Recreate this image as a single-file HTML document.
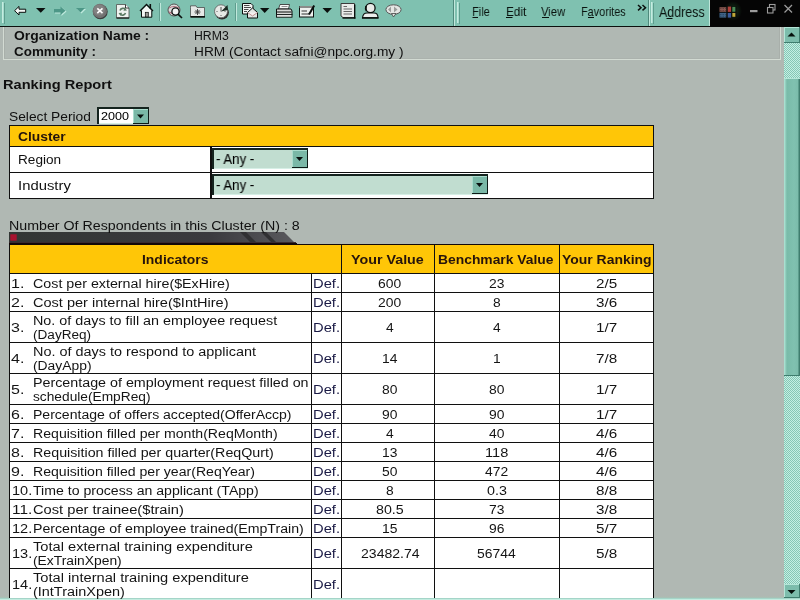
<!DOCTYPE html>
<html><head><meta charset="utf-8"><title>Ranking Report</title>
<style>
html,body{margin:0;padding:0;width:800px;height:600px;overflow:hidden;background:#b0b8b3;}
body{position:relative;font-family:"Liberation Sans",sans-serif;}
.r{position:absolute;}
.t{position:absolute;white-space:pre;will-change:transform;line-height:16px;transform-origin:0 0;font-family:"Liberation Sans",sans-serif;}
svg{position:absolute;left:0;top:0;}
</style></head><body>
<div class="r" style="left:0px;top:0px;width:800px;height:26px;background:#7fc1b0;"></div>
<div class="r" style="left:0px;top:26px;width:800px;height:1px;background:#0c100e;"></div>
<div class="r" style="left:710px;top:0px;width:90px;height:27px;background:#050505;"></div>
<div class="r" style="left:709px;top:0px;width:1px;height:26px;background:#bfe6da;"></div>
<div class="r" style="left:2px;top:2px;width:1px;height:21px;background:#c6ebe0;"></div>
<div class="r" style="left:3px;top:2px;width:1px;height:21px;background:#a5dccd;"></div>
<div class="r" style="left:4px;top:3px;width:1px;height:21px;background:#5e9c8d;"></div>
<div class="r" style="left:457px;top:2px;width:1px;height:21px;background:#c6ebe0;"></div>
<div class="r" style="left:458px;top:2px;width:1px;height:21px;background:#a5dccd;"></div>
<div class="r" style="left:459px;top:3px;width:1px;height:21px;background:#5e9c8d;"></div>
<div class="r" style="left:651px;top:2px;width:1px;height:21px;background:#c6ebe0;"></div>
<div class="r" style="left:652px;top:2px;width:1px;height:21px;background:#a5dccd;"></div>
<div class="r" style="left:653px;top:3px;width:1px;height:21px;background:#5e9c8d;"></div>
<div class="r" style="left:453px;top:0px;width:1px;height:26px;background:#4f8a7c;"></div>
<div class="r" style="left:454px;top:0px;width:1px;height:26px;background:#c0e8dc;"></div>
<div class="r" style="left:648px;top:0px;width:1px;height:26px;background:#4f8a7c;"></div>
<div class="r" style="left:649px;top:0px;width:1px;height:26px;background:#c0e8dc;"></div>
<div class="r" style="left:160px;top:3px;width:1px;height:18px;background:#c0e8dc;"></div>
<div class="r" style="left:159px;top:3px;width:1px;height:18px;background:#5e9c8d;"></div>
<div class="r" style="left:236px;top:3px;width:1px;height:18px;background:#c0e8dc;"></div>
<div class="r" style="left:235px;top:3px;width:1px;height:18px;background:#5e9c8d;"></div>
<div class="r" style="left:3px;top:27px;width:1px;height:33px;background:#d3dbd3;"></div>
<div class="r" style="left:3px;top:59px;width:778px;height:1px;background:#d3dbd3;"></div>
<div class="r" style="left:780px;top:27px;width:1px;height:33px;background:#d3dbd3;"></div>
<div class="r" style="left:4px;top:27px;width:1px;height:32px;background:#a8afaa;"></div>
<div class="r" style="left:779px;top:27px;width:1px;height:32px;background:#a8afaa;"></div>
<div class="r" style="left:4px;top:58px;width:776px;height:1px;background:#abb2ad;"></div>
<div class="r" style="left:784px;top:27px;width:16px;height:571px;background:#c4f0e4;background-image:linear-gradient(45deg,#86c6b5 25%,transparent 25%,transparent 75%,#86c6b5 75%),linear-gradient(45deg,#86c6b5 25%,transparent 25%,transparent 75%,#86c6b5 75%);background-size:2px 2px;background-position:0 0,1px 1px;"></div>
<div class="r" style="left:784px;top:27px;width:16px;height:16px;background:#7cbdac;"></div>
<div class="r" style="left:784px;top:27px;width:16px;height:1px;background:#b5e6d8;"></div>
<div class="r" style="left:784px;top:27px;width:1px;height:16px;background:#b5e6d8;"></div>
<div class="r" style="left:784px;top:42px;width:16px;height:1px;background:#3f7d6e;"></div>
<div class="r" style="left:799px;top:27px;width:1px;height:16px;background:#3f7d6e;"></div>
<div class="r" style="left:784px;top:584px;width:16px;height:14px;background:#7cbdac;"></div>
<div class="r" style="left:784px;top:584px;width:16px;height:1px;background:#b5e6d8;"></div>
<div class="r" style="left:784px;top:584px;width:1px;height:14px;background:#b5e6d8;"></div>
<div class="r" style="left:784px;top:597px;width:16px;height:1px;background:#3f7d6e;"></div>
<div class="r" style="left:799px;top:584px;width:1px;height:14px;background:#3f7d6e;"></div>
<div class="r" style="left:784px;top:78px;width:16px;height:298px;background:linear-gradient(90deg,#b5e8da 0,#9dd6c6 1px,#79bba9 3px,#80c1b0 10px,#7bbcab 14px,#3f7d6e 15px);"></div>
<div class="r" style="left:784px;top:78px;width:16px;height:1px;background:#b5e6d8;"></div>
<div class="r" style="left:784px;top:375px;width:16px;height:1px;background:#3f7d6e;"></div>
<div class="r" style="left:0px;top:598px;width:800px;height:1px;background:#a5d5c8;"></div>
<div class="r" style="left:0px;top:599px;width:800px;height:1px;background:#c4ece0;"></div>
<div class="r" style="left:0px;top:596px;width:784px;height:2px;background:linear-gradient(180deg,#b1b8b1,#a6c2b8);"></div>
<div class="r" style="left:97px;top:107px;width:52px;height:17px;background:#ffffff;"></div>
<div class="r" style="left:97px;top:107px;width:52px;height:2px;background:#15241f;"></div>
<div class="r" style="left:97px;top:107px;width:2px;height:17px;background:#15241f;"></div>
<div class="r" style="left:99px;top:123px;width:50px;height:1px;background:#d6efe6;"></div>
<div class="r" style="left:133px;top:109px;width:16px;height:15px;background:#7ab8a7;"></div>
<div class="r" style="left:133px;top:109px;width:16px;height:1px;background:#a9dccd;"></div>
<div class="r" style="left:133px;top:109px;width:1px;height:15px;background:#a9dccd;"></div>
<div class="r" style="left:133px;top:123px;width:16px;height:1px;background:#0c1a16;"></div>
<div class="r" style="left:148px;top:109px;width:1px;height:15px;background:#0c1a16;"></div>
<div class="r" style="left:133px;top:123px;width:16px;height:1px;background:#0c1a16;"></div>
<svg width="800" height="600" style="pointer-events:none"><polygon points="137,114.5 144,114.5 140.5,118.5" fill="#08100e"/></svg>
<div class="r" style="left:9px;top:125px;width:645px;height:74px;background:#101010;"></div>
<div class="r" style="left:10px;top:126px;width:643px;height:20px;background:#ffc607;"></div>
<div class="r" style="left:10px;top:147px;width:200px;height:25px;background:#ffffff;"></div>
<div class="r" style="left:212px;top:147px;width:441px;height:25px;background:#ffffff;"></div>
<div class="r" style="left:10px;top:173px;width:200px;height:25px;background:#ffffff;"></div>
<div class="r" style="left:212px;top:173px;width:441px;height:25px;background:#ffffff;"></div>
<div class="r" style="left:212px;top:148px;width:96px;height:21px;background:#c1ddd0;"></div>
<div class="r" style="left:212px;top:148px;width:96px;height:2px;background:#15241f;"></div>
<div class="r" style="left:212px;top:148px;width:2px;height:21px;background:#15241f;"></div>
<div class="r" style="left:214px;top:168px;width:94px;height:1px;background:#d6efe6;"></div>
<div class="r" style="left:292px;top:150px;width:16px;height:18px;background:#7ab8a7;"></div>
<div class="r" style="left:292px;top:150px;width:16px;height:1px;background:#a9dccd;"></div>
<div class="r" style="left:292px;top:150px;width:1px;height:18px;background:#a9dccd;"></div>
<div class="r" style="left:292px;top:167px;width:16px;height:1px;background:#0c1a16;"></div>
<div class="r" style="left:307px;top:150px;width:1px;height:18px;background:#0c1a16;"></div>
<svg width="800" height="600" style="pointer-events:none"><polygon points="296,157 303,157 299.5,161" fill="#08100e"/></svg>
<div class="r" style="left:212px;top:174px;width:276px;height:21px;background:#c1ddd0;"></div>
<div class="r" style="left:212px;top:174px;width:276px;height:2px;background:#15241f;"></div>
<div class="r" style="left:212px;top:174px;width:2px;height:21px;background:#15241f;"></div>
<div class="r" style="left:214px;top:194px;width:274px;height:1px;background:#d6efe6;"></div>
<div class="r" style="left:472px;top:176px;width:16px;height:18px;background:#7ab8a7;"></div>
<div class="r" style="left:472px;top:176px;width:16px;height:1px;background:#a9dccd;"></div>
<div class="r" style="left:472px;top:176px;width:1px;height:18px;background:#a9dccd;"></div>
<div class="r" style="left:472px;top:193px;width:16px;height:1px;background:#0c1a16;"></div>
<div class="r" style="left:487px;top:176px;width:1px;height:18px;background:#0c1a16;"></div>
<svg width="800" height="600" style="pointer-events:none"><polygon points="476,183 483,183 479.5,187" fill="#08100e"/></svg>
<svg width="800" height="600"><defs><linearGradient id="bg1" x1="0" x2="1" y1="0" y2="0"><stop offset="0" stop-color="#323634"/><stop offset="0.7" stop-color="#3a3a3e"/><stop offset="1" stop-color="#5a5a5e"/></linearGradient></defs><polygon points="9,232 284,232 295,243 9,243" fill="url(#bg1)"/><polygon points="240,232 246,232 257,243 251,243" fill="#303032"/><polygon points="261,232 266,232 277,243 272,243" fill="#303032"/><rect x="10.3" y="234.3" width="6.4" height="6.4" fill="#a8122e"/></svg>
<div class="r" style="left:9px;top:242px;width:287px;height:1px;background:#3a2a30;"></div>
<div class="r" style="left:9px;top:243px;width:288px;height:1px;background:#120808;"></div>
<div class="r" style="left:9px;top:244px;width:645px;height:1px;background:#120808;"></div>
<div class="r" style="left:9px;top:245px;width:645px;height:354px;background:#101010;"></div>
<div class="r" style="left:10px;top:245px;width:331px;height:28px;background:#ffc607;"></div>
<div class="r" style="left:342px;top:245px;width:92px;height:28px;background:#ffc607;"></div>
<div class="r" style="left:435px;top:245px;width:124px;height:28px;background:#ffc607;"></div>
<div class="r" style="left:560px;top:245px;width:93px;height:28px;background:#ffc607;"></div>
<div class="r" style="left:10px;top:274px;width:301px;height:18px;background:#ffffff;"></div>
<div class="r" style="left:312px;top:274px;width:29px;height:18px;background:#ffffff;"></div>
<div class="r" style="left:342px;top:274px;width:92px;height:18px;background:#ffffff;"></div>
<div class="r" style="left:435px;top:274px;width:124px;height:18px;background:#ffffff;"></div>
<div class="r" style="left:560px;top:274px;width:93px;height:18px;background:#ffffff;"></div>
<div class="r" style="left:10px;top:293px;width:301px;height:18px;background:#ffffff;"></div>
<div class="r" style="left:312px;top:293px;width:29px;height:18px;background:#ffffff;"></div>
<div class="r" style="left:342px;top:293px;width:92px;height:18px;background:#ffffff;"></div>
<div class="r" style="left:435px;top:293px;width:124px;height:18px;background:#ffffff;"></div>
<div class="r" style="left:560px;top:293px;width:93px;height:18px;background:#ffffff;"></div>
<div class="r" style="left:10px;top:312px;width:301px;height:30px;background:#ffffff;"></div>
<div class="r" style="left:312px;top:312px;width:29px;height:30px;background:#ffffff;"></div>
<div class="r" style="left:342px;top:312px;width:92px;height:30px;background:#ffffff;"></div>
<div class="r" style="left:435px;top:312px;width:124px;height:30px;background:#ffffff;"></div>
<div class="r" style="left:560px;top:312px;width:93px;height:30px;background:#ffffff;"></div>
<div class="r" style="left:10px;top:343px;width:301px;height:30px;background:#ffffff;"></div>
<div class="r" style="left:312px;top:343px;width:29px;height:30px;background:#ffffff;"></div>
<div class="r" style="left:342px;top:343px;width:92px;height:30px;background:#ffffff;"></div>
<div class="r" style="left:435px;top:343px;width:124px;height:30px;background:#ffffff;"></div>
<div class="r" style="left:560px;top:343px;width:93px;height:30px;background:#ffffff;"></div>
<div class="r" style="left:10px;top:374px;width:301px;height:30px;background:#ffffff;"></div>
<div class="r" style="left:312px;top:374px;width:29px;height:30px;background:#ffffff;"></div>
<div class="r" style="left:342px;top:374px;width:92px;height:30px;background:#ffffff;"></div>
<div class="r" style="left:435px;top:374px;width:124px;height:30px;background:#ffffff;"></div>
<div class="r" style="left:560px;top:374px;width:93px;height:30px;background:#ffffff;"></div>
<div class="r" style="left:10px;top:405px;width:301px;height:18px;background:#ffffff;"></div>
<div class="r" style="left:312px;top:405px;width:29px;height:18px;background:#ffffff;"></div>
<div class="r" style="left:342px;top:405px;width:92px;height:18px;background:#ffffff;"></div>
<div class="r" style="left:435px;top:405px;width:124px;height:18px;background:#ffffff;"></div>
<div class="r" style="left:560px;top:405px;width:93px;height:18px;background:#ffffff;"></div>
<div class="r" style="left:10px;top:424px;width:301px;height:18px;background:#ffffff;"></div>
<div class="r" style="left:312px;top:424px;width:29px;height:18px;background:#ffffff;"></div>
<div class="r" style="left:342px;top:424px;width:92px;height:18px;background:#ffffff;"></div>
<div class="r" style="left:435px;top:424px;width:124px;height:18px;background:#ffffff;"></div>
<div class="r" style="left:560px;top:424px;width:93px;height:18px;background:#ffffff;"></div>
<div class="r" style="left:10px;top:443px;width:301px;height:18px;background:#ffffff;"></div>
<div class="r" style="left:312px;top:443px;width:29px;height:18px;background:#ffffff;"></div>
<div class="r" style="left:342px;top:443px;width:92px;height:18px;background:#ffffff;"></div>
<div class="r" style="left:435px;top:443px;width:124px;height:18px;background:#ffffff;"></div>
<div class="r" style="left:560px;top:443px;width:93px;height:18px;background:#ffffff;"></div>
<div class="r" style="left:10px;top:462px;width:301px;height:18px;background:#ffffff;"></div>
<div class="r" style="left:312px;top:462px;width:29px;height:18px;background:#ffffff;"></div>
<div class="r" style="left:342px;top:462px;width:92px;height:18px;background:#ffffff;"></div>
<div class="r" style="left:435px;top:462px;width:124px;height:18px;background:#ffffff;"></div>
<div class="r" style="left:560px;top:462px;width:93px;height:18px;background:#ffffff;"></div>
<div class="r" style="left:10px;top:481px;width:301px;height:18px;background:#ffffff;"></div>
<div class="r" style="left:312px;top:481px;width:29px;height:18px;background:#ffffff;"></div>
<div class="r" style="left:342px;top:481px;width:92px;height:18px;background:#ffffff;"></div>
<div class="r" style="left:435px;top:481px;width:124px;height:18px;background:#ffffff;"></div>
<div class="r" style="left:560px;top:481px;width:93px;height:18px;background:#ffffff;"></div>
<div class="r" style="left:10px;top:500px;width:301px;height:18px;background:#ffffff;"></div>
<div class="r" style="left:312px;top:500px;width:29px;height:18px;background:#ffffff;"></div>
<div class="r" style="left:342px;top:500px;width:92px;height:18px;background:#ffffff;"></div>
<div class="r" style="left:435px;top:500px;width:124px;height:18px;background:#ffffff;"></div>
<div class="r" style="left:560px;top:500px;width:93px;height:18px;background:#ffffff;"></div>
<div class="r" style="left:10px;top:519px;width:301px;height:18px;background:#ffffff;"></div>
<div class="r" style="left:312px;top:519px;width:29px;height:18px;background:#ffffff;"></div>
<div class="r" style="left:342px;top:519px;width:92px;height:18px;background:#ffffff;"></div>
<div class="r" style="left:435px;top:519px;width:124px;height:18px;background:#ffffff;"></div>
<div class="r" style="left:560px;top:519px;width:93px;height:18px;background:#ffffff;"></div>
<div class="r" style="left:10px;top:538px;width:301px;height:30px;background:#ffffff;"></div>
<div class="r" style="left:312px;top:538px;width:29px;height:30px;background:#ffffff;"></div>
<div class="r" style="left:342px;top:538px;width:92px;height:30px;background:#ffffff;"></div>
<div class="r" style="left:435px;top:538px;width:124px;height:30px;background:#ffffff;"></div>
<div class="r" style="left:560px;top:538px;width:93px;height:30px;background:#ffffff;"></div>
<div class="r" style="left:10px;top:569px;width:301px;height:30px;background:#ffffff;"></div>
<div class="r" style="left:312px;top:569px;width:29px;height:30px;background:#ffffff;"></div>
<div class="r" style="left:342px;top:569px;width:92px;height:30px;background:#ffffff;"></div>
<div class="r" style="left:435px;top:569px;width:124px;height:30px;background:#ffffff;"></div>
<div class="r" style="left:560px;top:569px;width:93px;height:30px;background:#ffffff;"></div>
<div class="r" style="left:0px;top:598px;width:800px;height:1px;background:#a5d5c8;"></div>
<div class="r" style="left:0px;top:599px;width:800px;height:1px;background:#c4ece0;"></div>
<svg width="800" height="600" viewBox="0 0 800 600"><polygon points="14.6,10.7 19,6.4 19,9.2 25.7,9.2 25.7,12.3 19,12.3 19,15" fill="#f4f8f6" stroke="#0a0f0d" stroke-width="1" stroke-linejoin="miter"/><polygon points="36,8 45.5,8 40.75,12.8" fill="#0a0f0d"/><polygon points="55,10 61.5,10 61.5,7 66.5,11.5 61.5,16 61.5,13.5 55,13.5" fill="#bfe9dd"/><polygon points="54,9 60.5,9 60.5,6.5 65.5,10.8 60.5,15 60.5,12.6 54,12.6" fill="#4d9787"/><polygon points="77,9 86,9 81.5,13.6" fill="#bfe9dd"/><polygon points="76,8 85,8 80.5,12.6" fill="#4d9787"/><circle cx="100.3" cy="11.8" r="7.4" fill="#3a3a3a"/><circle cx="99.8" cy="11" r="7.2" fill="#727272"/><circle cx="99.2" cy="10" r="5.6" fill="#828282"/><path d="M97.3,8.4 L102.5,13.2 M102.5,8.4 L97.3,13.2" stroke="#ffffff" stroke-width="1.6" fill="none"/><path d="M116.5,4.5 H125.5 L129,8 V18 H116.5 Z" fill="#eef2ef" stroke="#5a605c" stroke-width="0.9"/><path d="M116.5,18 H129.2" stroke="#101412" stroke-width="1.2"/><path d="M125.5,4.5 V8 H129" fill="#ffffff" stroke="#0a0f0d" stroke-width="0.8"/><path d="M120,10.5 A3.2,3.2 0 0 1 125.5,9.5 M125.5,13 A3.2,3.2 0 0 1 120,14" stroke="#5a7a62" stroke-width="1.6" fill="none"/><polygon points="124.5,7.5 127,10.5 123.5,10.8" fill="#5a7a62"/><polygon points="121,16 118.5,13 122,12.8" fill="#5a7a62"/><polygon points="141.5,10.5 146.5,5.5 151.5,10.5 151.5,17 141.5,17" fill="#f3f6f4"/><path d="M140,11 L146.5,4.5 L153,11" stroke="#0a0f0d" stroke-width="1.4" fill="none"/><path d="M141.5,10.5 V17.2 H151.8 V10.5" stroke="#0a0f0d" stroke-width="1" fill="none"/><rect x="149.5" y="4" width="1.6" height="4.5" fill="#0a0f0d"/><rect x="145.3" y="12.3" width="3" height="4.6" fill="#9a9a96" stroke="#0a0f0d" stroke-width="0.7"/><circle cx="174" cy="10" r="6" fill="#d9dcda" stroke="#555" stroke-width="1"/><path d="M169,8 Q174,5 179,8 M169,12 Q174,15 179,12" stroke="#b06a7a" stroke-width="1.2" fill="none"/><circle cx="175.5" cy="11.5" r="3.6" fill="#f4f4f4" stroke="#0a0f0d" stroke-width="1.3"/><path d="M178,14.2 L182,18" stroke="#0a0f0d" stroke-width="1.7"/><path d="M190.5,7.5 V5.8 H196 L197,7.5 H204.5 V17 H190.5 Z" fill="#e6e8e6" stroke="#4a4e4c" stroke-width="0.8"/><rect x="190.5" y="16" width="14.5" height="1.6" fill="#0a0f0d"/><path d="M197.5,9 V15 M194.5,12 H200.5 M195.4,9.9 L199.6,14.1 M199.6,9.9 L195.4,14.1" stroke="#3a3a3a" stroke-width="0.9"/><circle cx="222" cy="12.6" r="6.9" fill="#2e2e2e"/><circle cx="221" cy="11.3" r="6.5" fill="#e6e9e6" stroke="#5a5a5a" stroke-width="0.8"/><path d="M221,11.5 L227.5,5 L228,10 Z" fill="#1a2a22"/><path d="M221,7 V11.5" stroke="#444" stroke-width="0.9"/><path d="M216.5,11.5 h1 M221,16 v-1 M225.5,11.5 h-1" stroke="#555" stroke-width="0.9"/><path d="M242.5,3.5 H251 L253,5.5 V14 H242.5 Z" fill="#f3f5f3" stroke="#0a0f0d" stroke-width="1"/><path d="M244,5.5 H249.5 M244,7.5 H251 M244,9.5 H248.5 M244,11.5 H247" stroke="#4a4a4a" stroke-width="1"/><path d="M247.5,18 V12.5 L252.5,8 L257.5,12.5 V18 Z" fill="#e4e6e4" stroke="#0a0f0d" stroke-width="1"/><path d="M247.5,12.5 L252.5,16 L257.5,12.5" stroke="#b88" stroke-width="0.9" fill="#f6f0f0"/><polygon points="260,8 269.4,8 264.7,13" fill="#0a0f0d"/><path d="M280,4.5 H289.5 L288.5,9 H278.5 Z" fill="#f8f9f8" stroke="#3a3a3a" stroke-width="0.9"/><path d="M281.5,6.5 H287.5" stroke="#888" stroke-width="0.9"/><path d="M276.5,9 H291 L292,11 V15 H276.5 Z" fill="#d8dad8" stroke="#0a0f0d" stroke-width="1"/><rect x="276.5" y="14.6" width="15.5" height="2.6" fill="#eceeec" stroke="#0a0f0d" stroke-width="0.9"/><path d="M277,12 H291.5" stroke="#0a0f0d" stroke-width="1"/><rect x="299.5" y="6.5" width="14" height="10.5" fill="#eef0ee" stroke="#0a0f0d" stroke-width="1"/><rect x="299.5" y="6" width="14" height="2" fill="#8a8c8a"/><path d="M301.5,11 H307 M301.5,14 H309" stroke="#333" stroke-width="1"/><path d="M314.2,5.5 L309,14.5" stroke="#0a0f0d" stroke-width="2"/><polygon points="322.5,8 332,8 327.25,13" fill="#0a0f0d"/><path d="M341,3.5 H354.5 V17.5 H343 L341,16 Z" fill="#e9ebe9" stroke="#3a3a3a" stroke-width="1"/><rect x="354" y="4.5" width="1.4" height="14" fill="#0a0f0d"/><rect x="342.5" y="17.4" width="13" height="1.3" fill="#0a0f0d"/><path d="M343.5,6.5 H347 M343.5,9 H352 M343.5,11.5 H352 M343.5,14 H352" stroke="#666" stroke-width="1"/><circle cx="370.5" cy="8" r="4.6" fill="#e8eae8" stroke="#0a0f0d" stroke-width="1.3"/><path d="M362.5,17.8 Q363,13 367,13 H374 Q378,13 378,17.8 Z" fill="#eceeec" stroke="#0a0f0d" stroke-width="1.1"/><rect x="362" y="17.2" width="16.5" height="1.5" fill="#0a0f0d"/><path d="M366,6 Q365,9 366.5,11" stroke="#0a0f0d" stroke-width="1.6" fill="none"/><ellipse cx="393.5" cy="9.6" rx="7.6" ry="4.8" fill="#e4e6e4" stroke="#555" stroke-width="1"/><path d="M391.5,13.5 L393.5,17 L396,13.5 Z" fill="#e4e6e4" stroke="#444" stroke-width="0.8"/><path d="M388,9.5 L391,6.5 V12.5 Z M394,6.5 L397.5,9.5 L394,12.5 Z" fill="#9a9c9a"/><path d="M638,5 L641,7.7 L638,10.4 M642.5,5 L645.5,7.7 L642.5,10.4" stroke="#0a0f0d" stroke-width="1.5" fill="none"/><path d="M472.5,17.5 H478 M506,17.5 H512.5 M542,17.5 H549 M588,17.5 H594 M666.5,18.5 H672.5" stroke="#0a0f0d" stroke-width="1"/><defs><radialGradient id="wg" cx="0.5" cy="0.5" r="0.5"><stop offset="0" stop-color="#16301c"/><stop offset="0.6" stop-color="#0c180e"/><stop offset="1" stop-color="#050505"/></radialGradient></defs><ellipse cx="733" cy="11" rx="9" ry="10" fill="url(#wg)"/><rect x="719.5" y="7.2" width="7" height="4.6" fill="#8a5a52"/><rect x="719.5" y="12.8" width="7" height="4.8" fill="#3f6488"/><path d="M720,8.5 H726 M720,10.5 H726" stroke="#5a3a3a" stroke-width="0.8" stroke-dasharray="1.5 1"/><path d="M720,14.5 H726 M720,16.3 H726" stroke="#2a4460" stroke-width="0.8" stroke-dasharray="1.5 1"/><rect x="727.5" y="6.6" width="3.8" height="5.4" fill="#b0403a"/><rect x="727.5" y="13" width="3.8" height="4.6" fill="#3c5c9c"/><rect x="732.2" y="7" width="3.4" height="4.8" fill="#4a8c58"/><rect x="732.2" y="12.8" width="3.4" height="4" fill="#c0a838"/><path d="M727,5.8 V18.2 M731.7,5.8 V18 M736,6.4 V17.4 M727,12.4 H736" stroke="#0a0a0a" stroke-width="0.9"/><rect x="750" y="10" width="7.5" height="2.2" fill="#9c9c9c"/><rect x="769.5" y="4.5" width="5.5" height="5.5" fill="none" stroke="#9c9c9c" stroke-width="1.1"/><rect x="767.5" y="7.5" width="5.5" height="5.5" fill="#050505" stroke="#9c9c9c" stroke-width="1.1"/><path d="M784.5,5 L792,12.5 M792,5 L784.5,12.5" stroke="#9c9c9c" stroke-width="1.25"/><polygon points="787.5,36.5 795.5,36.5 791.5,32.5" fill="#06100c"/><polygon points="787.5,590 795.5,590 791.5,594" fill="#06100c"/></svg>
<span class="t" style="left:471.89px;top:3.51px;font-size:13.6px;color:#0a1410;transform:scaleX(0.8183);">File</span>
<span class="t" style="left:505.96px;top:3.51px;font-size:13.6px;color:#0a1410;transform:scaleX(0.8619);">Edit</span>
<span class="t" style="left:541.38px;top:3.51px;font-size:13.6px;color:#0a1410;transform:scaleX(0.8297);">View</span>
<span class="t" style="left:581.40px;top:3.51px;font-size:13.6px;color:#0a1410;transform:scaleX(0.8014);">Favorites</span>
<span class="t" style="left:658.52px;top:4.04px;font-size:15px;color:#0a1410;transform:scaleX(0.8281);">Address</span>
<span class="t" style="left:14.24px;top:28.03px;font-size:12px;color:#101010;transform:scaleX(1.1589);font-weight:bold;">Organization Name :</span>
<span class="t" style="left:14.26px;top:44.03px;font-size:12px;color:#101010;transform:scaleX(1.1179);font-weight:bold;">Community :</span>
<span class="t" style="left:193.93px;top:28.03px;font-size:12px;color:#101010;transform:scaleX(1.0220);">HRM3</span>
<span class="t" style="left:193.85px;top:44.03px;font-size:12px;color:#101010;transform:scaleX(1.1413);">HRM (Contact safni@npc.org.my )</span>
<span class="t" style="left:3.00px;top:77.03px;font-size:12px;color:#101010;transform:scaleX(1.2179);font-weight:bold;">Ranking Report</span>
<span class="t" style="left:8.84px;top:109.03px;font-size:12px;color:#101010;transform:scaleX(1.1477);">Select Period</span>
<span class="t" style="left:101.31px;top:108.36px;font-size:11px;color:#000;transform:scaleX(1.1393);-webkit-text-stroke:0.05px #000;">2000</span>
<span class="t" style="left:17.94px;top:129.03px;font-size:12px;color:#24140c;transform:scaleX(1.1518);font-weight:bold;">Cluster</span>
<span class="t" style="left:18.05px;top:152.03px;font-size:12px;color:#101010;transform:scaleX(1.1333);">Region</span>
<span class="t" style="left:17.98px;top:178.03px;font-size:12px;color:#101010;transform:scaleX(1.2377);">Industry</span>
<span class="t" style="left:216.07px;top:151.37px;font-size:14px;color:#000;transform:scaleX(0.9449);-webkit-text-stroke:0.08px #000;">- Any -</span>
<span class="t" style="left:216.07px;top:177.37px;font-size:14px;color:#000;transform:scaleX(0.9449);-webkit-text-stroke:0.08px #000;">- Any -</span>
<span class="t" style="left:9.02px;top:218.03px;font-size:12px;color:#101010;transform:scaleX(1.1847);">Number Of Respondents in this Cluster (N) : 8</span>
<span class="t" style="left:141.83px;top:252.03px;font-size:12px;color:#26140c;transform:scaleX(1.1602);font-weight:bold;">Indicators</span>
<span class="t" style="left:351.21px;top:252.03px;font-size:12px;color:#26140c;transform:scaleX(1.1904);font-weight:bold;">Your Value</span>
<span class="t" style="left:438.44px;top:252.03px;font-size:12px;color:#26140c;transform:scaleX(1.1547);font-weight:bold;">Benchmark Value</span>
<span class="t" style="left:562.03px;top:252.03px;font-size:12px;color:#26140c;transform:scaleX(1.1610);font-weight:bold;">Your Ranking</span>
<span class="t" style="left:11.32px;top:276.03px;font-size:12px;color:#141414;transform:scaleX(1.3352);">1.</span>
<span class="t" style="left:32.82px;top:276.03px;font-size:12px;color:#141414;transform:scaleX(1.1891);">Cost per external hire($ExHire)</span>
<span class="t" style="left:312.99px;top:276.03px;font-size:12px;color:#191944;transform:scaleX(1.2278);">Def.</span>
<span class="t" style="left:378.41px;top:276.03px;font-size:12px;color:#141414;transform:scaleX(1.1577);">600</span>
<span class="t" style="left:489.09px;top:276.03px;font-size:12px;color:#141414;transform:scaleX(1.1557);">23</span>
<span class="t" style="left:595.81px;top:276.03px;font-size:12px;color:#141414;transform:scaleX(1.2694);">2/5</span>
<span class="t" style="left:11.32px;top:295.03px;font-size:12px;color:#141414;transform:scaleX(1.3352);">2.</span>
<span class="t" style="left:32.80px;top:295.03px;font-size:12px;color:#141414;transform:scaleX(1.2113);">Cost per internal hire($IntHire)</span>
<span class="t" style="left:312.99px;top:295.03px;font-size:12px;color:#191944;transform:scaleX(1.2278);">Def.</span>
<span class="t" style="left:378.41px;top:295.03px;font-size:12px;color:#141414;transform:scaleX(1.1577);">200</span>
<span class="t" style="left:492.97px;top:295.03px;font-size:12px;color:#141414;transform:scaleX(1.1487);">8</span>
<span class="t" style="left:595.81px;top:295.03px;font-size:12px;color:#141414;transform:scaleX(1.2694);">3/6</span>
<span class="t" style="left:11.32px;top:320.03px;font-size:12px;color:#141414;transform:scaleX(1.3352);">3.</span>
<span class="t" style="left:32.81px;top:313.03px;font-size:12px;color:#141414;transform:scaleX(1.1963);">No. of days to fill an employee request</span>
<span class="t" style="left:32.85px;top:327.03px;font-size:12px;color:#141414;transform:scaleX(1.1314);">(DayReq)</span>
<span class="t" style="left:312.99px;top:320.03px;font-size:12px;color:#191944;transform:scaleX(1.2278);">Def.</span>
<span class="t" style="left:386.17px;top:320.03px;font-size:12px;color:#141414;transform:scaleX(1.1487);">4</span>
<span class="t" style="left:492.97px;top:320.03px;font-size:12px;color:#141414;transform:scaleX(1.1487);">4</span>
<span class="t" style="left:595.81px;top:320.03px;font-size:12px;color:#141414;transform:scaleX(1.2694);">1/7</span>
<span class="t" style="left:11.32px;top:351.03px;font-size:12px;color:#141414;transform:scaleX(1.3352);">4.</span>
<span class="t" style="left:32.81px;top:344.03px;font-size:12px;color:#141414;transform:scaleX(1.2024);">No. of days to respond to applicant</span>
<span class="t" style="left:32.84px;top:358.03px;font-size:12px;color:#141414;transform:scaleX(1.1547);">(DayApp)</span>
<span class="t" style="left:312.99px;top:351.03px;font-size:12px;color:#191944;transform:scaleX(1.2278);">Def.</span>
<span class="t" style="left:382.29px;top:351.03px;font-size:12px;color:#141414;transform:scaleX(1.1557);">14</span>
<span class="t" style="left:492.97px;top:351.03px;font-size:12px;color:#141414;transform:scaleX(1.1487);">1</span>
<span class="t" style="left:595.81px;top:351.03px;font-size:12px;color:#141414;transform:scaleX(1.2694);">7/8</span>
<span class="t" style="left:11.32px;top:382.03px;font-size:12px;color:#141414;transform:scaleX(1.3352);">5.</span>
<span class="t" style="left:32.81px;top:375.03px;font-size:12px;color:#141414;transform:scaleX(1.1905);">Percentage of employment request filled on</span>
<span class="t" style="left:32.84px;top:389.03px;font-size:12px;color:#141414;transform:scaleX(1.1440);">schedule(EmpReq)</span>
<span class="t" style="left:312.99px;top:382.03px;font-size:12px;color:#191944;transform:scaleX(1.2278);">Def.</span>
<span class="t" style="left:382.29px;top:382.03px;font-size:12px;color:#141414;transform:scaleX(1.1557);">80</span>
<span class="t" style="left:489.09px;top:382.03px;font-size:12px;color:#141414;transform:scaleX(1.1557);">80</span>
<span class="t" style="left:595.81px;top:382.03px;font-size:12px;color:#141414;transform:scaleX(1.2694);">1/7</span>
<span class="t" style="left:11.32px;top:407.03px;font-size:12px;color:#141414;transform:scaleX(1.3352);">6.</span>
<span class="t" style="left:32.83px;top:407.03px;font-size:12px;color:#141414;transform:scaleX(1.1698);">Percentage of offers accepted(OfferAccp)</span>
<span class="t" style="left:312.99px;top:407.03px;font-size:12px;color:#191944;transform:scaleX(1.2278);">Def.</span>
<span class="t" style="left:382.29px;top:407.03px;font-size:12px;color:#141414;transform:scaleX(1.1557);">90</span>
<span class="t" style="left:489.09px;top:407.03px;font-size:12px;color:#141414;transform:scaleX(1.1557);">90</span>
<span class="t" style="left:595.81px;top:407.03px;font-size:12px;color:#141414;transform:scaleX(1.2694);">1/7</span>
<span class="t" style="left:11.32px;top:426.03px;font-size:12px;color:#141414;transform:scaleX(1.3352);">7.</span>
<span class="t" style="left:32.82px;top:426.03px;font-size:12px;color:#141414;transform:scaleX(1.1756);">Requisition filled per month(ReqMonth)</span>
<span class="t" style="left:312.99px;top:426.03px;font-size:12px;color:#191944;transform:scaleX(1.2278);">Def.</span>
<span class="t" style="left:386.17px;top:426.03px;font-size:12px;color:#141414;transform:scaleX(1.1487);">4</span>
<span class="t" style="left:489.09px;top:426.03px;font-size:12px;color:#141414;transform:scaleX(1.1557);">40</span>
<span class="t" style="left:595.81px;top:426.03px;font-size:12px;color:#141414;transform:scaleX(1.2694);">4/6</span>
<span class="t" style="left:11.32px;top:445.03px;font-size:12px;color:#141414;transform:scaleX(1.3352);">8.</span>
<span class="t" style="left:32.82px;top:445.03px;font-size:12px;color:#141414;transform:scaleX(1.1870);">Requisition filled per quarter(ReqQurt)</span>
<span class="t" style="left:312.99px;top:445.03px;font-size:12px;color:#191944;transform:scaleX(1.2278);">Def.</span>
<span class="t" style="left:382.29px;top:445.03px;font-size:12px;color:#141414;transform:scaleX(1.1557);">13</span>
<span class="t" style="left:485.17px;top:445.03px;font-size:12px;color:#141414;transform:scaleX(1.2156);">118</span>
<span class="t" style="left:595.81px;top:445.03px;font-size:12px;color:#141414;transform:scaleX(1.2694);">4/6</span>
<span class="t" style="left:11.32px;top:464.03px;font-size:12px;color:#141414;transform:scaleX(1.3352);">9.</span>
<span class="t" style="left:32.82px;top:464.03px;font-size:12px;color:#141414;transform:scaleX(1.1744);">Requisition filled per year(ReqYear)</span>
<span class="t" style="left:312.99px;top:464.03px;font-size:12px;color:#191944;transform:scaleX(1.2278);">Def.</span>
<span class="t" style="left:382.29px;top:464.03px;font-size:12px;color:#141414;transform:scaleX(1.1557);">50</span>
<span class="t" style="left:485.21px;top:464.03px;font-size:12px;color:#141414;transform:scaleX(1.1577);">472</span>
<span class="t" style="left:595.81px;top:464.03px;font-size:12px;color:#141414;transform:scaleX(1.2694);">4/6</span>
<span class="t" style="left:11.80px;top:483.03px;font-size:12px;color:#141414;transform:scaleX(1.2108);">10.</span>
<span class="t" style="left:32.82px;top:483.03px;font-size:12px;color:#141414;transform:scaleX(1.1748);">Time to process an applicant (TApp)</span>
<span class="t" style="left:312.99px;top:483.03px;font-size:12px;color:#191944;transform:scaleX(1.2278);">Def.</span>
<span class="t" style="left:386.17px;top:483.03px;font-size:12px;color:#141414;transform:scaleX(1.1487);">8</span>
<span class="t" style="left:486.86px;top:483.03px;font-size:12px;color:#141414;transform:scaleX(1.1913);">0.3</span>
<span class="t" style="left:595.81px;top:483.03px;font-size:12px;color:#141414;transform:scaleX(1.2694);">8/8</span>
<span class="t" style="left:11.75px;top:502.03px;font-size:12px;color:#141414;transform:scaleX(1.2853);">11.</span>
<span class="t" style="left:32.79px;top:502.03px;font-size:12px;color:#141414;transform:scaleX(1.2223);">Cost per trainee($train)</span>
<span class="t" style="left:312.99px;top:502.03px;font-size:12px;color:#191944;transform:scaleX(1.2278);">Def.</span>
<span class="t" style="left:376.19px;top:502.03px;font-size:12px;color:#141414;transform:scaleX(1.1822);">80.5</span>
<span class="t" style="left:489.09px;top:502.03px;font-size:12px;color:#141414;transform:scaleX(1.1557);">73</span>
<span class="t" style="left:595.81px;top:502.03px;font-size:12px;color:#141414;transform:scaleX(1.2694);">3/8</span>
<span class="t" style="left:11.80px;top:521.03px;font-size:12px;color:#141414;transform:scaleX(1.2108);">12.</span>
<span class="t" style="left:32.82px;top:521.03px;font-size:12px;color:#141414;transform:scaleX(1.1789);">Percentage of employee trained(EmpTrain)</span>
<span class="t" style="left:312.99px;top:521.03px;font-size:12px;color:#191944;transform:scaleX(1.2278);">Def.</span>
<span class="t" style="left:382.29px;top:521.03px;font-size:12px;color:#141414;transform:scaleX(1.1557);">15</span>
<span class="t" style="left:489.09px;top:521.03px;font-size:12px;color:#141414;transform:scaleX(1.1557);">96</span>
<span class="t" style="left:595.81px;top:521.03px;font-size:12px;color:#141414;transform:scaleX(1.2694);">5/7</span>
<span class="t" style="left:11.80px;top:546.03px;font-size:12px;color:#141414;transform:scaleX(1.2108);">13.</span>
<span class="t" style="left:32.79px;top:539.03px;font-size:12px;color:#141414;transform:scaleX(1.2204);">Total external training expenditure</span>
<span class="t" style="left:32.84px;top:553.03px;font-size:12px;color:#141414;transform:scaleX(1.1535);">(ExTrainXpen)</span>
<span class="t" style="left:312.99px;top:546.03px;font-size:12px;color:#191944;transform:scaleX(1.2278);">Def.</span>
<span class="t" style="left:360.70px;top:546.03px;font-size:12px;color:#141414;transform:scaleX(1.1707);">23482.74</span>
<span class="t" style="left:477.46px;top:546.03px;font-size:12px;color:#141414;transform:scaleX(1.1592);">56744</span>
<span class="t" style="left:595.81px;top:546.03px;font-size:12px;color:#141414;transform:scaleX(1.2694);">5/8</span>
<span class="t" style="left:11.80px;top:577.03px;font-size:12px;color:#141414;transform:scaleX(1.2108);">14.</span>
<span class="t" style="left:32.79px;top:570.03px;font-size:12px;color:#141414;transform:scaleX(1.2208);">Total internal training expenditure</span>
<span class="t" style="left:32.81px;top:584.03px;font-size:12px;color:#141414;transform:scaleX(1.2037);">(IntTrainXpen)</span>
<span class="t" style="left:312.99px;top:577.03px;font-size:12px;color:#191944;transform:scaleX(1.2278);">Def.</span>
</body></html>
